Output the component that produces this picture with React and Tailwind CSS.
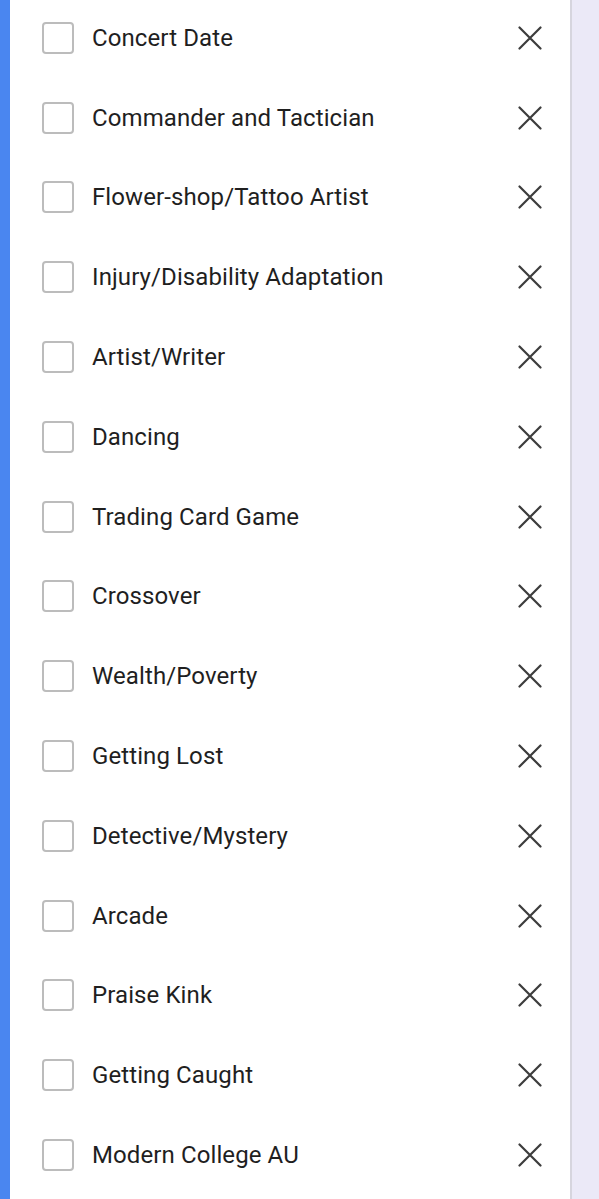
const items = [
  "Concert Date",
  "Commander and Tactician",
  "Flower-shop/Tattoo Artist",
  "Injury/Disability Adaptation",
  "Artist/Writer",
  "Dancing",
  "Trading Card Game",
  "Crossover",
  "Wealth/Poverty",
  "Getting Lost",
  "Detective/Mystery",
  "Arcade",
  "Praise Kink",
  "Getting Caught",
  "Modern College AU",
];

function CloseIcon() {
  return (
    <svg width="24" height="24" viewBox="0 0 24 24" className="shrink-0">
      <path d="M1.5 1.5L22.5 22.5M22.5 1.5L1.5 22.5" stroke="#3c3c3c" strokeWidth="2.2" strokeLinecap="round" />
    </svg>
  );
}

export default function App() {
  return (
    <div className="flex h-[1199px] w-[599px] overflow-hidden bg-[#ebe9f7]" style={{ fontFamily: "Roboto, 'Noto Sans', sans-serif" }}>
      <div className="w-[10px] shrink-0 bg-[#4a86f0]" />
      <div className="w-[562px] shrink-0 border-r-2 border-[#d6d5de] bg-white">
        <ul className="-mt-[2px]">
          {items.map((label) => (
            <li key={label} className="flex h-[79.8px] items-center pl-[32px] pr-[28px]">
              <span className="h-[32px] w-[32px] shrink-0 rounded-[4px] border-2 border-[#bcbcbc]" />
              <span className="ml-[18px] flex-1 text-[24px] leading-none tracking-[0.1px] text-[#1f1f1f]">{label}</span>
              <CloseIcon />
            </li>
          ))}
        </ul>
      </div>
    </div>
  );
}
